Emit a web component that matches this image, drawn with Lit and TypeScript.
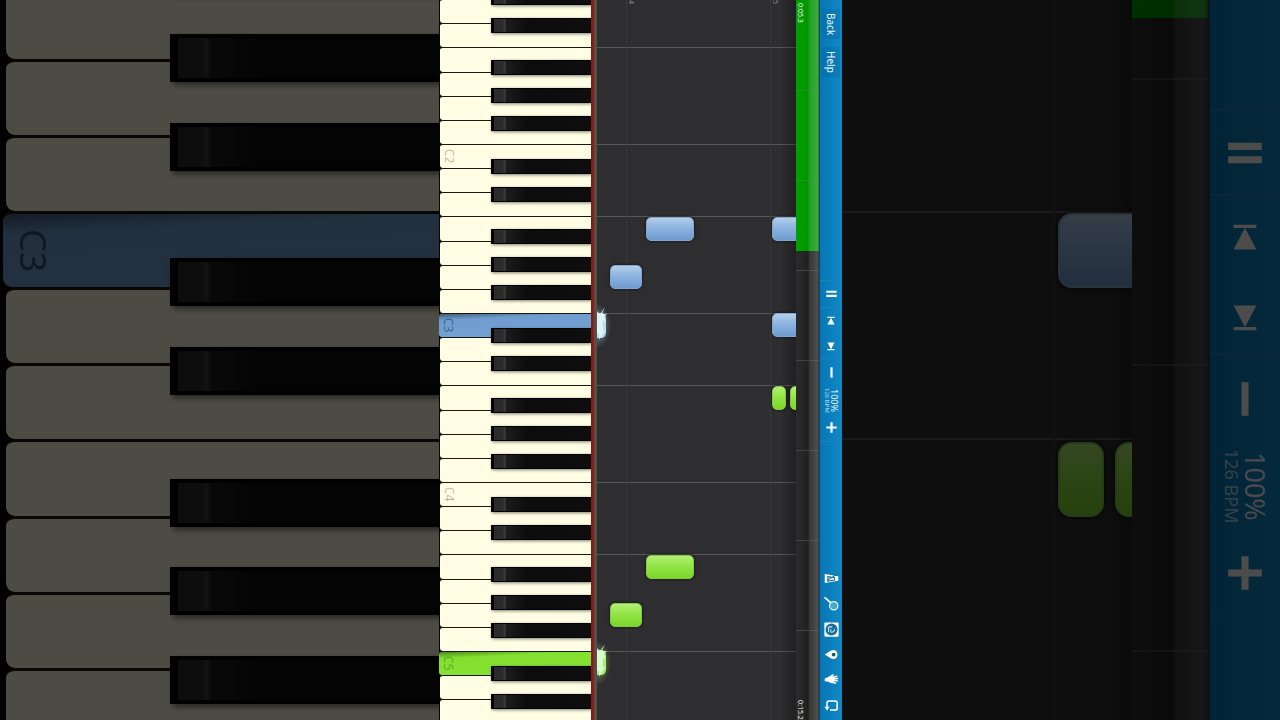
import { LitElement, html, css, svg, nothing } from "lit";
import { customElement, property } from "lit/decorators.js";

interface Note {
  x: number;
  y: number;
  w: number;
  h: number;
  tone: "blue" | "green";
}

const OCTAVE_UNITS = 169;
const SHARP_OFFSETS = [15, 43, 85, 113, 141];

/** Keyboard turned on its side: white keys stacked in octaves, sharps laid over them. */
@customElement("piano-keys")
class PianoKeys extends LitElement {
  @property({ type: Number }) first = 1;
  @property({ type: Number }) count = 5;
  @property({ attribute: false }) pressed: Record<string, string> = {};
  @property({ attribute: false }) labelled: string[] = [];

  static styles = css`
    :host {
      display: block;
      overflow: hidden;
      background: #050505;
      font-family: "Noto Sans", sans-serif;
    }
    .octave {
      position: relative;
      display: flex;
      flex-direction: column;
      height: var(--octave);
    }
    .octave:first-child {
      margin-top: var(--shift);
    }
    .white {
      flex: 1;
      min-height: 0;
      display: flex;
      align-items: center;
      margin: 0 0 0 var(--edge);
      padding: 0 0 0 var(--label-pad);
      border: 0 solid #17170f;
      border-top-width: var(--line);
      border-radius: var(--radius) 0 0 var(--radius);
      background: #fffee4;
      color: #a9a996;
      font: var(--label-weight) var(--label) / 1 "Noto Sans", sans-serif;
    }
    .white span {
      writing-mode: vertical-rl;
    }
    .white.blue {
      margin-left: var(--pressed-edge);
      background: linear-gradient(177deg, #435f7a 0, #6f9dcf 22%, #74a2d3);
      color: #2c4f78;
    }
    .white.green {
      margin-left: var(--pressed-edge);
      background: linear-gradient(177deg, #4c8a1c 0, #83e02f 22%, #86e233);
      color: #55901f;
    }
    .sharp {
      position: absolute;
      left: var(--sharp-left);
      right: 0;
      height: 9%;
      padding: 0;
      border: 0 solid #020202;
      border-width: var(--sharp-border) 0 var(--sharp-border) var(--sharp-end);
      background: linear-gradient(90deg, #2b2b2b 0, #2b2b2b 9%, #3c3c3c 11%, #1c1c1c 13%, #0c0c0c 34%, #0e0e0e);
      box-shadow: var(--line) var(--line) var(--shade) rgba(40, 40, 30, 0.6);
    }
  `;

  private octave(n: number) {
    return html`
      <div class="octave">
        ${["C", "D", "E", "F", "G", "A", "B"].map((letter) => {
          const name = letter + n;
          return html`<button class="white ${this.pressed[name] ?? ""}" aria-label=${name}>
            ${this.labelled.includes(name) ? html`<span>${name}</span>` : nothing}
          </button>`;
        })}
        ${SHARP_OFFSETS.map(
          (offset) => html`<button
            class="sharp"
            aria-label="sharp"
            style="top:${(offset / OCTAVE_UNITS) * 100}%"
          ></button>`
        )}
      </div>
    `;
  }

  render() {
    return Array.from({ length: this.count }, (_, i) => this.octave(this.first + i));
  }
}

/** Falling notes on a dark grid, with pitch lanes and bar lines. */
@customElement("note-roll")
class NoteRoll extends LitElement {
  @property({ attribute: false }) notes: Note[] = [];
  @property({ attribute: false }) bars: { x: number; label: string }[] = [];
  @property({ attribute: false }) hits: { y: number; tone: string }[] = [];
  @property({ type: Number }) octaves = 5;

  static styles = css`
    :host {
      display: block;
      position: relative;
      overflow: hidden;
      background: #2e2e30;
      font-family: "Noto Sans", sans-serif;
    }
    .octave {
      display: grid;
      grid-template-rows: 72fr 97fr;
      height: var(--octave);
    }
    .octave:first-child {
      margin-top: var(--shift);
    }
    .lane {
      border-top: var(--line) solid #58585a;
    }
    .bar {
      position: absolute;
      top: 0;
      bottom: 0;
      border-left: var(--line) solid #39393b;
      color: #8c8c8c;
      font-size: 7px;
      line-height: 8px;
      writing-mode: vertical-rl;
    }
    .shade {
      position: absolute;
      inset: 0 0 0 auto;
      width: 8%;
      background: linear-gradient(90deg, transparent, rgba(0, 0, 0, 0.3));
    }
    .note {
      position: absolute;
      box-sizing: border-box;
      border-radius: var(--note-radius);
      box-shadow: 0 0 var(--shade) #0c0c14;
    }
    .blue {
      background: linear-gradient(#b3cdea, #8db4e0 45%, #6f9bce);
      border: var(--line) solid #84a6cc;
    }
    .green {
      background: linear-gradient(#b2ef76, #93e546 45%, #7cd629);
      border: var(--line) solid #83c948;
    }
    .hit {
      position: absolute;
      left: 0;
      width: 28px;
      height: 44px;
      overflow: visible;
    }
  `;

  render() {
    return html`
      ${Array.from(
        { length: this.octaves },
        () => html`<div class="octave"><div class="lane"></div><div class="lane"></div></div>`
      )}
      ${this.bars.map((b) => html`<div class="bar" style="left:${b.x}px">${b.label}</div>`)}
      <div class="shade"></div>
      ${this.notes.map(
        (n) => html`<div
          class="note ${n.tone}"
          style="left:${n.x}px;top:${n.y}px;width:${n.w}px;height:${n.h}px"
        ></div>`
      )}
      ${this.hits.map((h) => {
        const fill = h.tone === "blue" ? "#b8dcf6" : "#a6ee70";
        return html`<svg class="hit" style="top:${h.y}px" viewBox="0 0 28 44">
          <defs>
            <radialGradient id="glow-${h.tone}" cx="0" cy="0.5" r="0.5">
              <stop offset="0" stop-color=${fill} stop-opacity="0.8" />
              <stop offset="0.6" stop-color=${fill} stop-opacity="0.25" />
              <stop offset="1" stop-color=${fill} stop-opacity="0" />
            </radialGradient>
          </defs>
          <rect width="28" height="44" fill="url(#glow-${h.tone})" />
          <path d="M0 9 H5 Q9 10 9 15 V28 Q9 33 5 34 H0Z" fill=${fill} />
          <path
            d="M0 7 L3 10 L8 3 L5 10 L10 10 L7 13 L9 19 L6 16 V27 L9 25 L5 31 L2 36 V30 H0Z"
            fill="#f0fff4"
            opacity="0.7"
          />
        </svg>`;
      })}
    `;
  }
}

/** Song position strip. */
@customElement("song-progress")
class SongProgress extends LitElement {
  @property({ type: Number }) done = 0;
  @property() from = "";
  @property() to = "";

  static styles = css`
    :host {
      display: block;
      position: relative;
      overflow: hidden;
      background: linear-gradient(90deg, #2b2b2b, #252525 35%, #1e1e1e 52%, #363636 58%, #4e4e4e 92%, #3a3a3a);
      font-family: "Noto Sans", sans-serif;
    }
    .fill {
      position: absolute;
      inset: 0 0 auto 0;
      background: linear-gradient(90deg, #00a000, #009600 52%, #23a023 58%, #3bad3b 94%, #1c7a1c);
    }
    .ticks {
      position: absolute;
      inset: var(--tick-shift) 0 0;
      background: repeating-linear-gradient(
        transparent 0,
        transparent calc(var(--tick) - var(--line)),
        rgba(120, 120, 120, 0.35) calc(var(--tick) - var(--line)),
        rgba(120, 120, 120, 0.35) var(--tick)
      );
    }
    .times {
      position: relative;
      display: flex;
      justify-content: space-between;
      box-sizing: border-box;
      width: 9px;
      height: 100%;
      padding-top: 3px;
      color: #f0f0f0;
      font-size: 7px;
      line-height: 9px;
      white-space: nowrap;
      writing-mode: vertical-rl;
    }
  `;

  render() {
    return html`
      <div class="fill" style="height:${this.done}px"></div>
      <div class="ticks"></div>
      <div class="times"><span>${this.from}</span><span>${this.to}</span></div>
    `;
  }
}

const ICONS = {
  pause: svg`<path d="M2 5.6H18V9H2zM2 12H18V15.4H2z" fill="#fff"/>`,
  previous: svg`<path d="M4 3H16V4.8H4zM10 4.6L16 16H4z" fill="#fff"/>`,
  next: svg`<path d="M4 4H16L10 15.4zM4 15.2H16V17H4z" fill="#fff"/>`,
  minus: svg`<path d="M8.3 2H11.7V18H8.3z" fill="#fff"/>`,
  plus: svg`<path d="M8.3 2H11.7V8.3H18V11.7H11.7V18H8.3V11.7H2V8.3H8.3z" fill="#fff"/>`,
  metronome: svg`<path d="M1 4L19 7V13L1 16z" fill="#fff"/><path d="M5 7.500L14 9V12L5 13.500zM4 12.500L18 4" fill="none" stroke="#1b6f9d" stroke-width="1.4"/>`,
  search: svg`<path d="M1.5 2.5L8.5 8.5" stroke="#fff" stroke-width="2.4" stroke-linecap="round"/><circle cx="13" cy="13" r="5.6" fill="#4ba7d3" stroke="#e3f3fb" stroke-width="1.6"/>`,
  note: svg`<rect x="0.5" y="0.5" width="19" height="19" rx="1.5" fill="#fff"/><circle cx="10" cy="10" r="8" fill="#176f9e"/><path d="M6 6.5V13.5M6 6.5H11M9 13.5Q14 14 14 9.5M9 9.5V13" fill="none" stroke="#cfe8f5" stroke-width="1.4"/>`,
  marker: svg`<path d="M1 10L9 5Q13 3 16.5 5.5Q19.5 10 16.5 14.5Q13 17 9 15z" fill="#fff"/><circle cx="12.8" cy="10" r="2.5" fill="#12577e"/>`,
  hand: svg`<path d="M1 8.6L5 7L9 4.5Q12 2 13.5 3.5L11.5 6L17.5 4.6Q19 5.4 17.6 6.4L13 8L18.6 7.6Q20 8.6 18.6 9.5L13 10.2L18.4 11Q19.4 12.2 18 12.8L12.6 12.4L16.4 14.2Q16.8 15.6 15.4 15.6L9 14.6L5 12.6L1 12.4z" fill="#fff"/>`,
  loop: svg`<path d="M8 16H15Q17.500 16 17.500 13.500V6.500Q17.500 4 15 4H6.500Q4 4 4 6.500V12" fill="none" stroke="#fff" stroke-width="2"/><path d="M0.500 11.500H7.500L4 16.500z" fill="#fff"/>`,
};

/** Player toolbar running down the side of the roll. */
@customElement("player-toolbar")
class PlayerToolbar extends LitElement {
  @property({ type: Boolean }) compact = false;

  static styles = css`
    :host {
      display: grid;
      grid-template-rows: minmax(0, 1fr) var(--controls) minmax(0, 1fr);
      box-sizing: border-box;
      padding-top: var(--bar-pad);
      overflow: hidden;
      background: linear-gradient(90deg, #0776b5, #0a7fbd 45%, #1288c3);
      border-left: var(--line) solid #0a4468;
      font-family: "Noto Sans", sans-serif;
    }
    button {
      display: grid;
      place-items: center;
      min-width: 0;
      min-height: 0;
      padding: 0;
      border: 0;
      background: none;
      color: #fff;
      font: inherit;
    }
    .menu {
      display: flex;
      flex-direction: column;
      align-items: center;
      gap: 8px;
      padding-top: 7px;
    }
    .menu button {
      width: 18px;
      height: 30px;
      border-radius: 3px;
      background: rgba(0, 60, 110, 0.12);
      color: #eef8fd;
      font-size: 10px;
      line-height: 12px;
      writing-mode: vertical-rl;
    }
    .controls {
      display: grid;
      grid-template-rows: 27fr 27fr 24fr 28fr 28fr 27fr;
      box-sizing: border-box;
      border: 0 solid #1d83b4;
      border-width: var(--line) 0;
    }
    .split {
      border-bottom: var(--line) solid #1d83b4;
    }
    svg {
      display: block;
      width: var(--icon);
      height: var(--icon);
    }
    .skip svg {
      width: var(--skip);
      height: var(--skip);
    }
    .tempo {
      display: flex;
      flex-direction: column;
      align-items: center;
      justify-content: center;
      writing-mode: vertical-rl;
      min-height: 0;
      color: #eef8fd;
      white-space: nowrap;
    }
    .speed {
      font-size: var(--speed);
      line-height: 1;
    }
    .bpm {
      color: #b5d9ec;
      font-size: var(--bpm);
      line-height: 1.2;
    }
    .tools {
      display: grid;
      grid-template-rows: repeat(6, 1fr);
      align-self: end;
      height: 152px;
      padding-bottom: 2px;
    }
    .tools svg {
      width: 15px;
      height: 15px;
    }
  `;

  private button(name: keyof typeof ICONS, cls = "") {
    return html`<button class=${cls} aria-label=${name}>
      <svg viewBox="0 0 20 20">${ICONS[name]}</svg>
    </button>`;
  }

  render() {
    return html`
      <div class="menu">
        ${this.compact ? nothing : html`<button>Back</button><button>Help</button>`}
      </div>
      <div class="controls">
        ${this.button("pause", "split")} ${this.button("previous", "skip")}
        ${this.button("next", "skip split")} ${this.button("minus")}
        <div class="tempo"><span class="speed">100%</span><span class="bpm">126 BPM</span></div>
        ${this.button("plus")}
      </div>
      ${this.compact
        ? html`<div></div>`
        : html`<div class="tools">
            ${(["metronome", "search", "note", "marker", "hand", "loop"] as const).map((n) => this.button(n))}
          </div>`}
    `;
  }
}

@customElement("app-root")
class AppRoot extends LitElement {
  static styles = css`
    :host {
      display: grid;
      grid-template-columns: 439fr 403fr 438fr;
      height: 100vh;
      overflow: hidden;
      background: #000;
    }
    .backdrop {
      --octave: 533px;
      --shift: -322px;
      --edge: 6px;
      --pressed-edge: 3px;
      --radius: 9px;
      --line: 3px;
      --label: 36px;
      --label-weight: 400;
      --label-pad: 12px;
      --sharp-left: 170px;
      --sharp-border: 4px;
      --sharp-end: 8px;
      --shade: 6px;
      --note-radius: 14px;
      --controls: 508px;
      --bar-pad: 6px;
      --icon: 42px;
      --skip: 38px;
      --speed: 27px;
      --bpm: 18px;
      --tick: 286px;
      --tick-shift: -206px;
      filter: brightness(0.3);
      display: grid;
      min-width: 0;
      min-height: 0;
      height: 100vh;
    }
    .backdrop.right {
      --line: 2px;
      grid-template-columns: minmax(0, 1fr) 76px 72px;
    }
    .player {
      --octave: 169px;
      --shift: -25px;
      --edge: 1px;
      --pressed-edge: 0px;
      --radius: 3px;
      --line: 1px;
      --label: 12px;
      --label-weight: 300;
      --label-pad: 3px;
      --sharp-left: 52px;
      --sharp-border: 1px;
      --sharp-end: 3px;
      --shade: 3px;
      --note-radius: 5px;
      --controls: 162px;
      --bar-pad: 2px;
      --icon: 13px;
      --skip: 12px;
      --speed: 9px;
      --bpm: 6px;
      --tick: 90px;
      --tick-shift: 1px;
      display: grid;
      grid-template-columns: 152px 6px minmax(0, 1fr) 23px 23px;
      min-width: 0;
      height: 100vh;
    }
    .rail {
      background: linear-gradient(90deg, #8e1714 0, #8e1714 2px, #5e4542 3px, #5a5150 6px);
    }
  `;

  private readonly notes: Note[] = [
    { x: 49, y: 217, w: 48, h: 24, tone: "blue" },
    { x: 13, y: 265, w: 32, h: 24, tone: "blue" },
    { x: 175, y: 217, w: 48, h: 24, tone: "blue" },
    { x: 175, y: 313, w: 48, h: 24, tone: "blue" },
    { x: 175, y: 386, w: 14, h: 24, tone: "green" },
    { x: 193, y: 386, w: 14, h: 24, tone: "green" },
    { x: 49, y: 555, w: 48, h: 24, tone: "green" },
    { x: 13, y: 603, w: 32, h: 24, tone: "green" },
  ];

  private readonly closeNotes: Note[] = [
    { x: 216, y: 213, w: 120, h: 75, tone: "blue" },
    { x: 216, y: 442, w: 46, h: 75, tone: "green" },
    { x: 273, y: 442, w: 46, h: 75, tone: "green" },
  ];

  render() {
    return html`
      <div class="backdrop" aria-hidden="true">
        <piano-keys .first=${2} .count=${2} .pressed=${{ C3: "blue" }} .labelled=${["C3"]}></piano-keys>
      </div>
      <main class="player">
        <piano-keys
          .first=${1}
          .count=${5}
          .pressed=${{ C3: "blue", C5: "green" }}
          .labelled=${["C2", "C3", "C4", "C5"]}
        ></piano-keys>
        <div class="rail"></div>
        <note-roll
          .notes=${this.notes}
          .bars=${[
            { x: 29, label: "4" },
            { x: 173, label: "5" },
          ]}
          .hits=${[
            { y: 304, tone: "blue" },
            { y: 641, tone: "green" },
          ]}
        ></note-roll>
        <song-progress .done=${251} from="0:05.3" to="0:15.2"></song-progress>
        <player-toolbar></player-toolbar>
      </main>
      <div class="backdrop right" aria-hidden="true">
        <note-roll .octaves=${2} .notes=${this.closeNotes} .bars=${[{ x: 211, label: "" }]}></note-roll>
        <song-progress .done=${18}></song-progress>
        <player-toolbar compact></player-toolbar>
      </div>
    `;
  }
}
